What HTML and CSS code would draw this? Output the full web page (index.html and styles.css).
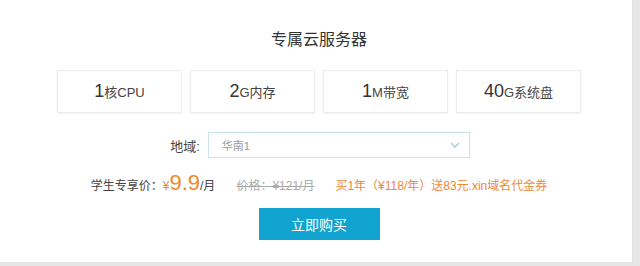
FILE: index.html
```html
<!DOCTYPE html>
<html lang="zh-CN">
<head>
    <meta charset="UTF-8">
    <title>专属云服务器</title>
    <link rel="stylesheet" href="styles.css">
</head>
<body>

<div class="panel">
    <h1 class="title">专属云服务器</h1>

    <div class="specs">
        <div class="spec"><span class="num">1</span>核CPU</div>
        <div class="spec"><span class="num">2</span>G内存</div>
        <div class="spec"><span class="num">1</span>M带宽</div>
        <div class="spec"><span class="num">40</span>G系统盘</div>
    </div>

    <div class="region">
        <span class="region-label">地域:</span>
        <div class="select">
            <span>华南1</span>
            <svg class="chevron" width="10" height="6" viewBox="0 0 10 6">
                <path d="M1 1 L5 5 L9 1" fill="none" stroke="#a9d3d6" stroke-width="1.6"/>
            </svg>
        </div>
    </div>

    <div class="price-row">
        <span class="student">学生专享价：<span class="yen">¥</span><span class="big">9.9</span>/月</span>
        <span class="old">价格：¥121/月</span>
        <span class="promo">买1年（¥118/年）送83元.xin域名代金券</span>
    </div>

    <div class="actions">
        <button class="buy">立即购买</button>
    </div>
</div>

</body>
</html>
```

FILE: styles.css
```css
body {
    margin: 0;
    background-color: #e6e6e6;
    font-family: "Liberation Sans", "Noto Sans CJK SC", sans-serif;
    color: #333;
}

.panel {
    width: 633px;
    height: 262px;
    background-color: #fff;
    border-right: 1px solid #e2e2e2;
    box-sizing: border-box;
    padding-top: 30px;
}

.title {
    margin: 0;
    font-size: 16px;
    font-weight: normal;
    line-height: 20px;
    text-align: center;
    color: #333;
    padding-left: 6px;
}

.specs {
    display: flex;
    justify-content: center;
    gap: 8px;
    margin-top: 20px;
    padding-left: 6px;
}

.spec {
    width: 125px;
    height: 43px;
    box-sizing: border-box;
    border: 1px solid #ececec;
    box-shadow: 0 1px 2px rgba(0, 0, 0, 0.05);
    display: flex;
    align-items: center;
    justify-content: center;
    font-size: 13px;
    color: #444;
}

.spec .num {
    font-size: 18px;
    color: #333;
}

.region {
    display: flex;
    align-items: center;
    justify-content: center;
    gap: 8px;
    margin-top: 19px;
    padding-left: 8px;
}

.region-label {
    font-size: 13px;
    color: #444;
}

.select {
    width: 262px;
    height: 26px;
    box-sizing: border-box;
    border: 1px solid #c9e4e4;
    display: flex;
    align-items: center;
    justify-content: space-between;
    padding: 0 9px 0 13px;
    font-size: 11px;
    color: #999;
}

.price-row {
    display: flex;
    align-items: baseline;
    justify-content: center;
    gap: 21px;
    margin-top: 12px;
    height: 26px;
    font-size: 12px;
    padding-left: 6px;
}

.student {
    color: #444;
}

.yen {
    color: #f08a2c;
    font-size: 12px;
}

.big {
    color: #f08a2c;
    font-size: 22px;
}

.old {
    color: #aaa;
    text-decoration: line-through;
}

.promo {
    color: #ec8a3a;
    font-size: 12px;
}

.actions {
    display: flex;
    justify-content: center;
    margin-top: 12px;
    padding-left: 6px;
}

.buy {
    width: 121px;
    height: 32px;
    border: none;
    background-color: #12a4d0;
    color: #fff;
    font-family: "Noto Sans CJK SC", sans-serif;
    font-size: 14px;
    cursor: pointer;
}
```
